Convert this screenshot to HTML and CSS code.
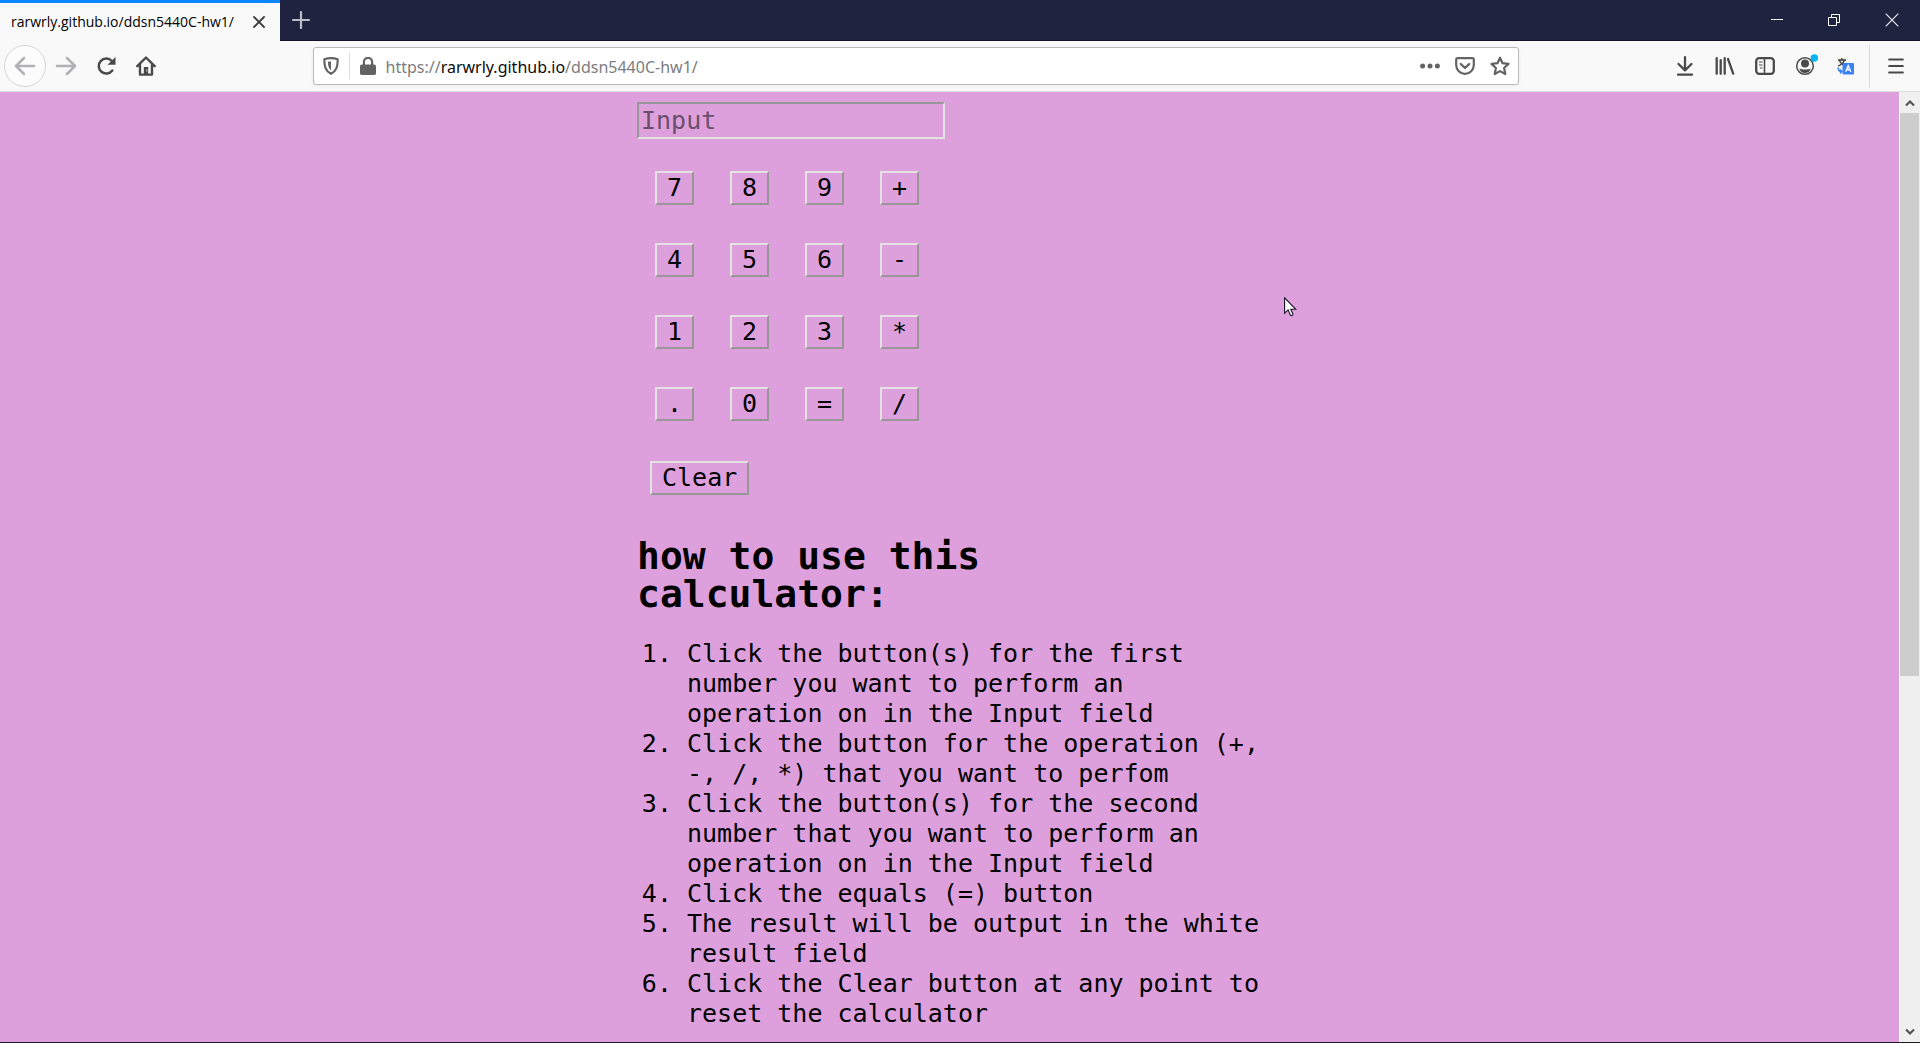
FILE: index.html
```html
<!DOCTYPE html>
<html lang="en">
<head>
<meta charset="utf-8">
<meta name="viewport" content="width=device-width, initial-scale=1">
<title>rarwrly.github.io/ddsn5440C-hw1/</title>
<link rel="stylesheet" href="styles.css">
</head>
<body>
<header class="browser">
  <div class="tabbar">
    <div class="tab">
      <span class="tab-title">rarwrly.github.io/ddsn5440C-hw1/</span>
      <button class="icon-btn tab-close" aria-label="Close tab"><svg width="12" height="12" viewBox="0 0 12 12"><path d="M1 1l10 10M11 1L1 11" stroke="#3c3c3f" stroke-width="1.8" stroke-linecap="round"/></svg></button>
    </div>
    <button class="icon-btn new-tab" aria-label="New tab"><svg width="18" height="18" viewBox="0 0 18 18"><path d="M9 1v16M1 9h16" stroke="#bcbcc8" stroke-width="2.2" stroke-linecap="round"/></svg></button>
    <div class="window-controls">
      <button class="icon-btn win-btn" aria-label="Minimize"><svg width="13" height="13" viewBox="0 0 13 13"><path d="M0 5.500h12" stroke="#fff"/></svg></button>
      <button class="icon-btn win-btn" aria-label="Restore"><svg width="13" height="13" viewBox="0 0 13 13"><path d="M.5 3.500h8v8h-8zM3.500 3.500v-3h8v8h-3" stroke="#fff" fill="none"/></svg></button>
      <button class="icon-btn win-btn" aria-label="Close"><svg width="14" height="14" viewBox="0 0 14 14"><path d="M.7.7l12.600 12.600M13.300.7L.7 13.300" stroke="#e8e8ec" stroke-width="1.200"/></svg></button>
    </div>
  </div>
  <div class="toolbar">
    <button class="icon-btn back" aria-label="Back"><svg width="22" height="20" viewBox="0 0 22 20"><path d="M20 10H2M10 2l-8 8 8 8" stroke="#b1b1b3" stroke-width="2.500" fill="none" stroke-linecap="round" stroke-linejoin="round"/></svg></button>
    <button class="icon-btn tool" aria-label="Forward"><svg width="22" height="20" viewBox="0 0 22 20"><path d="M2 10h18M12 2l8 8-8 8" stroke="#b1b1b3" stroke-width="2.500" fill="none" stroke-linecap="round" stroke-linejoin="round"/></svg></button>
    <button class="icon-btn tool" aria-label="Reload"><svg width="20" height="20" viewBox="0 0 20 20"><path d="M16.300 14.500A7.500 7.500 0 1 1 15.800 5" stroke="#4a4a4b" stroke-width="2.500" fill="none" stroke-linecap="round"/><path d="M19.500 1v7.800h-8z" fill="#4a4a4b"/></svg></button>
    <button class="icon-btn tool" aria-label="Home"><svg width="20" height="20" viewBox="0 0 20 20"><path d="M1.300 10.200L10 1.500l8.700 8.700M4 9v9.600h12V9" stroke="#4a4a4b" stroke-width="2.400" fill="none" stroke-linejoin="round" stroke-linecap="round"/><path d="M7.800 11h4.400v7.500H7.800z" fill="#4a4a4b"/><path d="M10.800 13.500v2" stroke="#ddd"/></svg></button>
    <div class="spacer"></div>
    <div class="urlbar">
      <button class="icon-btn url-shield" aria-label="Tracking protection"><svg width="16" height="18" viewBox="0 0 16 18"><path d="M8 1.200c2.300 0 4.600.4 6.700 1.100 0 6.700-.7 11.200-6.700 14.500C2 13.500 1.300 9 1.300 2.300 3.400 1.600 5.700 1.200 8 1.200z" fill="none" stroke="#636364" stroke-width="2.200" stroke-linejoin="round"/><path d="M8 4.300v8.900C5.500 11.300 5 8.500 5 4.700z" fill="#636364"/></svg></button>
      <button class="icon-btn url-lock" aria-label="Connection secure"><svg width="16" height="18" viewBox="0 0 16 18"><path d="M3.900 8V5a4.100 4.100 0 0 1 8.200 0v3" fill="none" stroke="#636364" stroke-width="2.200"/><rect x="0" y="7.500" width="16" height="10.500" rx="1.800" fill="#636364"/></svg></button>
      <div class="url-text" role="textbox" aria-label="Address" contenteditable="true" spellcheck="false">https://<span class="url-host">rarwrly.github.io</span>/ddsn5440C-hw1/</div>
      <button class="icon-btn url-action" aria-label="Page actions"><svg width="20" height="6" viewBox="0 0 20 6"><g fill="#636364"><circle cx="2.600" cy="3" r="2.500"/><circle cx="10" cy="3" r="2.500"/><circle cx="17.400" cy="3" r="2.500"/></g></svg></button>
      <button class="icon-btn url-action" aria-label="Save to Pocket"><svg width="20" height="18" viewBox="0 0 20 18"><path d="M2.500 1.200h15c.8 0 1.300.5 1.300 1.300V8a8.800 8.800 0 0 1-17.600 0V2.500c0-.8.500-1.300 1.300-1.300z" fill="none" stroke="#636364" stroke-width="2.200"/><path d="M5.800 7L10 11l4.200-4" fill="none" stroke="#636364" stroke-width="2.400" stroke-linecap="round" stroke-linejoin="round"/></svg></button>
      <button class="icon-btn url-action" aria-label="Bookmark this page"><svg width="20" height="20" viewBox="0 0 20 20"><path d="M10 1.700l2.500 5.500 6 .7-4.400 4.100 1.200 6L10 15.100 4.700 18l1.200-6L1.500 7.900l6-.7z" fill="none" stroke="#636364" stroke-width="2.200" stroke-linejoin="round"/></svg></button>
    </div>
    <div class="spacer"></div>
    <button class="icon-btn tool" aria-label="Downloads"><svg width="18" height="20" viewBox="0 0 18 20"><path d="M9 1.200v12.500M2.500 8L9 14.300 15.500 8M2 18.700h14" fill="none" stroke="#4a4a4b" stroke-width="2.300" stroke-linecap="round" stroke-linejoin="round"/></svg></button>
    <button class="icon-btn tool" aria-label="Library"><svg width="20" height="18" viewBox="0 0 20 18"><path d="M1.700 1.200v15.600M5.700 3.200v13.600M9.700 1.200v15.600M13 2l5.200 14.600" fill="none" stroke="#4a4a4b" stroke-width="2.300" stroke-linecap="round"/></svg></button>
    <button class="icon-btn tool" aria-label="Sidebars"><svg width="20" height="18" viewBox="0 0 20 18"><rect x="1.200" y="1.200" width="17.600" height="15.600" rx="3" fill="none" stroke="#4a4a4b" stroke-width="2.300"/><path d="M9.500 1v16" stroke="#4a4a4b" stroke-width="1.600"/><path d="M4 5h3.500M4 8h3.500M5 11h2.500" stroke="#4a4a4b" stroke-width="1.200"/></svg></button>
    <button class="icon-btn tool" aria-label="Account"><svg class="account" width="26" height="26" viewBox="0 0 26 26"><circle cx="13" cy="13" r="8.300" fill="none" stroke="#4a4a4b" stroke-width="1.500"/><circle cx="13" cy="10.500" r="4" fill="#4a4a4b"/><path d="M7.300 15.500c3 1.300 8.400 1.300 11.400 0-.8 3-3 4.500-5.700 4.500s-4.900-1.500-5.700-4.500z" fill="#4a4a4b"/><circle cx="22.300" cy="5" r="3.700" fill="#00b3f4"/></svg></button>
    <button class="icon-btn tool" aria-label="Translate"><svg width="18" height="18" viewBox="0 0 18 18"><path d="M1 .5h9.500l2 11H1z" fill="#f3f0e4"/><path d="M2 3h8M5.800 1v2M8.500 3C7.500 6 5 8 2 9M3.500 3.500C4.500 6 7 8 9.500 8.500" fill="none" stroke="#3d3d3d" stroke-width="1.300"/><rect x="6.500" y="6" width="11.500" height="11.500" rx="1" fill="#3b82f6"/><path d="M9.600 14.800L12.200 8.800l2.600 6M10.600 12.800h3.200" fill="none" stroke="#fff" stroke-width="1.400"/><path d="M2.300 10.500c-.3 2.500.7 4 3.200 4M4 12.500l2 2-2 2" fill="none" stroke="#3b82f6" stroke-width="1.500"/></svg></button>
    <span class="tool-sep"></span>
    <button class="icon-btn tool" aria-label="Open menu"><svg width="16" height="16" viewBox="0 0 16 16"><path d="M1.200 1.500h13.600M1.200 8h13.600M1.200 14.500h13.600" stroke="#4a4a4b" stroke-width="2.200" stroke-linecap="round"/></svg></button>
  </div>
</header>
<div class="viewport">
  <main class="page">
    <div class="column">
      <input class="display" type="text" placeholder="Input" aria-label="Input">
      <div class="keypad">
        <button class="key">7</button><button class="key">8</button><button class="key">9</button><button class="key">+</button>
        <button class="key">4</button><button class="key">5</button><button class="key">6</button><button class="key">-</button>
        <button class="key">1</button><button class="key">2</button><button class="key">3</button><button class="key">*</button>
        <button class="key">.</button><button class="key">0</button><button class="key">=</button><button class="key">/</button>
      </div>
      <button class="key clear">Clear</button>
      <h1 class="heading">how to use this calculator:</h1>
      <ol class="steps">
        <li>Click the button(s) for the first number you want to perform an operation on in the Input field</li>
        <li>Click the button for the operation (+, -, /, *) that you want to perfom</li>
        <li>Click the button(s) for the second number that you want to perform an operation on in the Input field</li>
        <li>Click the equals (=) button</li>
        <li>The result will be output in the white result field</li>
        <li>Click the Clear button at any point to reset the calculator</li>
      </ol>
    </div>
    <svg class="cursor" width="13" height="20" viewBox="0 0 13 20"><path d="M.6.8v15.400l3.500-3.300 2.300 5.300c.8 1 2.700.3 2.600-1l-2.200-4.900h5z" fill="#fff" stroke="#1b1226" stroke-width="1.100"/></svg>
  </main>
  <div class="scrollbar">
    <button class="icon-btn scroll-btn" aria-label="Scroll up"><svg width="10" height="8" viewBox="0 0 10 8"><path d="M1 6.500l4-4 4 4" fill="none" stroke="#555" stroke-width="2.200"/></svg></button>
    <div class="scroll-track"><div class="scroll-thumb"></div></div>
    <button class="icon-btn scroll-btn" aria-label="Scroll down"><svg width="10" height="8" viewBox="0 0 10 8"><path d="M1 1.500l4 4 4-4" fill="none" stroke="#555" stroke-width="2.200"/></svg></button>
  </div>
</div>
</body>
</html>
```
FILE: styles.css
```css
* {
  box-sizing: border-box;
}

body {
  margin: 0;
  min-height: 100vh;
  display: flex;
  flex-direction: column;
  border-bottom: 1px solid #1c1c20;
  font-family: "Open Sans", "Noto Sans", sans-serif;
}

.icon-btn {
  display: flex;
  align-items: center;
  justify-content: center;
  flex: none;
  margin: 0;
  padding: 0;
  border: 0;
  background: none;
}

/* Tab strip */
.tabbar {
  display: flex;
  height: 41px;
  background: #202340;
  box-shadow: inset 0 -1px #15132c;
}

.tab {
  display: flex;
  align-items: center;
  justify-content: space-between;
  width: 280px;
  padding: 0 11px;
  border-top: 3px solid #0a84ff;
  background: #f9f9fa;
}

.tab-title {
  font-size: 14px;
  line-height: 20px;
  white-space: nowrap;
}

.tab-close {
  width: 20px;
  height: 20px;
}

.new-tab {
  width: 42px;
  height: 40px;
}

.window-controls {
  display: flex;
  margin-left: auto;
}

.win-btn {
  width: 57px;
  height: 40px;
}

/* Navigation bar */
.toolbar {
  display: flex;
  align-items: center;
  height: 51px;
  padding: 0 4px;
  border-bottom: 1px solid #e0e0e2;
  background: #f9f9fa;
}

.back {
  width: 42px;
  height: 42px;
  border: 1px solid #d5d5d7;
  border-radius: 50%;
  background: #fcfcfd;
}

.tool {
  width: 40px;
  height: 40px;
}

.spacer {
  flex: 147 1 0;
}

.tool-sep {
  width: 1px;
  height: 42px;
  margin: 0 6px 0 4px;
  background: #d9d9db;
}

.urlbar {
  flex: 1208 1 0;
  display: flex;
  align-items: center;
  height: 38px;
  border: 1px solid #bababc;
  border-radius: 3px;
  background: #fff;
  box-shadow: 0 1px 4px rgba(0, 0, 0, 0.06);
}

.url-shield {
  width: 36px;
  height: 26px;
  border-right: 1px solid #dcdcde;
}

.url-lock {
  width: 36px;
  height: 26px;
}

.url-text {
  flex: 1;
  padding-top: 2px;
  outline: 0;
  color: #7d7d80;
  font-family: "Noto Sans", sans-serif;
  font-size: 16px;
  line-height: 24px;
  white-space: nowrap;
}

.url-host {
  color: #0c0c0d;
}

.url-action {
  width: 35px;
  height: 30px;
}

/* Web page */
.viewport {
  flex: 1;
  display: flex;
}

.page {
  position: relative;
  flex: 1;
  display: grid;
  grid-template-columns: repeat(3, minmax(0, 1fr));
  align-items: start;
  background: #dda0dd;
  color: #000;
  font-family: "DejaVu Sans Mono", monospace;
  font-size: 25px;
  line-height: 30px;
}

.column {
  grid-column: 2;
  padding: 10px 0 8px 4px;
}

.display {
  display: block;
  width: 308px;
  height: 37px;
  padding: 0 2px;
  border: 2px solid;
  border-color: #979797 #e3e3e3 #e3e3e3 #979797;
  background: transparent;
  font: inherit;
}

.display::placeholder {
  color: #6b4f6b;
  opacity: 1;
}

.keypad {
  display: grid;
  grid-template-columns: repeat(4, 39px);
  gap: 38px 36px;
  margin: 32px 0 40px 18px;
}

.key {
  height: 34px;
  padding: 0 10px 2px;
  border: 2px solid;
  border-color: #e3e3e3 #979797 #979797 #e3e3e3;
  background: transparent;
  color: #000;
  font: inherit;
}

.clear {
  display: block;
  margin-left: 13px;
}

.heading {
  max-width: 16em;
  margin: 42px 0 26px;
  font-size: 38px;
  line-height: 38px;
}

.steps {
  margin: 0;
  padding-left: 50px;
}

.cursor {
  position: absolute;
  left: 1284px;
  top: 205px;
}

/* Scrollbar */
.scrollbar {
  display: flex;
  flex-direction: column;
  width: 21px;
  border-left: 1px solid #fff;
  background: #f0f0f0;
}

.scroll-btn {
  width: 19px;
  height: 21px;
}

.scroll-track {
  flex: 1;
}

.scroll-thumb {
  width: 19px;
  height: 62%;
  background: #cdcdcd;
}
```
